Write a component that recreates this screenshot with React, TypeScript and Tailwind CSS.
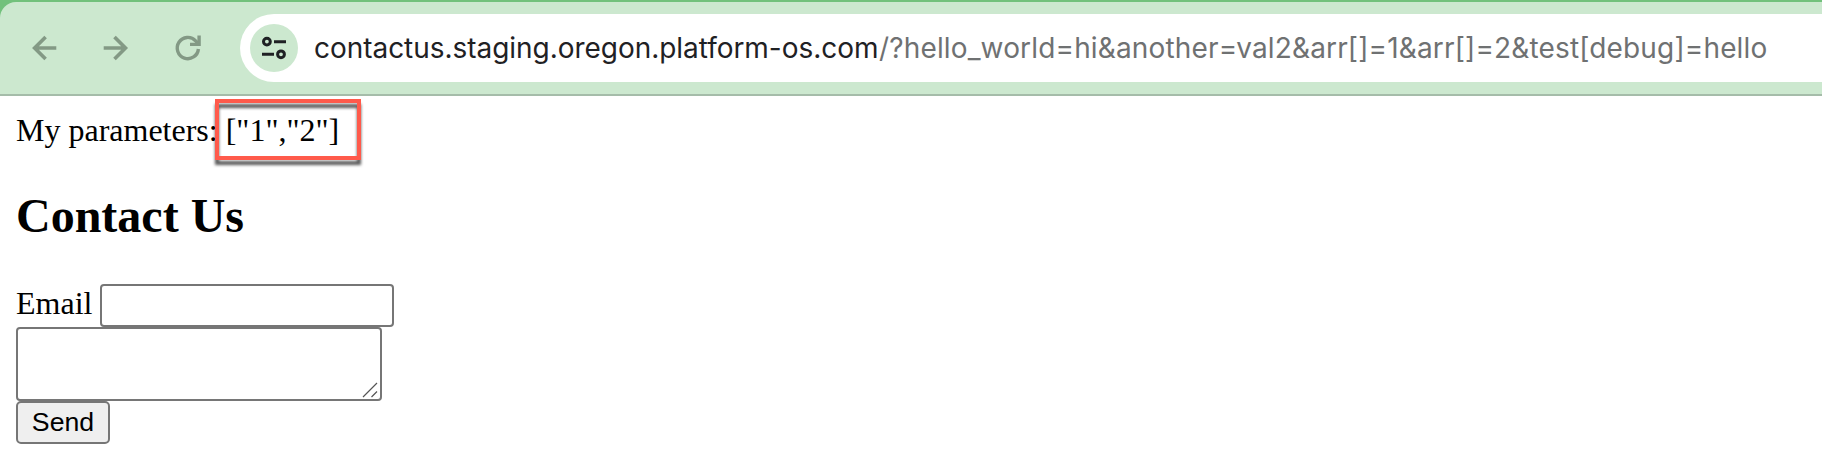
import React from "react";

function BackIcon() {
  return (
    <svg className="h-12 w-12" viewBox="0 0 48 48" fill="none" stroke="#839985" strokeWidth="3.6">
      <path d="M36.3 24H14.5M25.6 12.9L14.6 24L25.6 35.1" />
    </svg>
  );
}

function ForwardIcon() {
  return (
    <svg className="h-12 w-12" viewBox="0 0 48 48" fill="none" stroke="#839985" strokeWidth="3.6">
      <path d="M11.7 24H33.5M22.5 12.9L33.5 24L22.5 35.1" />
    </svg>
  );
}

function ReloadIcon() {
  return (
    <svg className="h-12 w-12" viewBox="0 0 48 48" fill="none" stroke="#839985" strokeWidth="3.4">
      <path d="M34.4 25A10.6 10.6 0 1 1 31.6 16.8L34.6 20" />
      <path d="M35.1 11.6V20.4H26" />
    </svg>
  );
}

function SiteSettingsIcon() {
  return (
    <svg className="h-12 w-12" viewBox="0 0 48 48" fill="none" stroke="#1f2124" strokeWidth="3">
      <circle cx="16.9" cy="17.6" r="3.4" />
      <circle cx="31" cy="30.3" r="3.4" />
      <path d="M24 17.7H36M12 30.3H24" />
    </svg>
  );
}

function Toolbar() {
  return (
    <header className="bg-[#72c17c] pt-0.5">
      <div className="flex h-[94px] items-center rounded-tl-[16px] border-b-2 border-[#a5bca9] bg-[#cce8cf] pl-5">
        <button aria-label="Back"><BackIcon /></button>
        <button aria-label="Forward" className="ml-6"><ForwardIcon /></button>
        <button aria-label="Reload" className="ml-6"><ReloadIcon /></button>
        <div className="ml-7 flex h-[68px] flex-1 items-center overflow-hidden rounded-l-full bg-white pl-2.5">
          <span className="rounded-full bg-[#cce8cf]"><SiteSettingsIcon /></span>
          <div className="ml-4 flex whitespace-pre font-['Inter',sans-serif] text-[28px] leading-9 text-[#6f7172]">
            <span className="w-[565px] tracking-[-0.04px] text-[#1f2124]">contactus.staging.oregon.platform-os.com</span>
            <span className="tracking-[0.15px]">/?hello_world=hi&amp;another=val2&amp;arr[]=1&amp;arr[]=2&amp;test[debug]=hello</span>
          </div>
        </div>
      </div>
    </header>
  );
}

export default function App() {
  return (
    <div className="h-[476px] overflow-hidden bg-white text-black">
      <Toolbar />
      <main className="px-4 pt-4 font-['Liberation_Serif',serif] text-[32px] leading-9">
        <p className="whitespace-pre">
          My parameters:{" "}
          <span className="relative">
            ["1","2"]
            <span className="absolute -left-[11px] -top-[13px] h-[61px] w-[146px] border-4 border-[#ff5a4b] [filter:drop-shadow(0_5px_1.5px_rgba(0,0,0,0.65))]" />
          </span>
        </p>
        <h1 className="mt-[41px] text-[48px] font-bold leading-[54px]">Contact Us</h1>
        <form className="mt-[41px]">
          <div className="flex h-[43px]">
            <label htmlFor="email" className="mt-px w-[84px]">Email</label>
            <input id="email" className="h-[43px] w-[294px] rounded-[4px] border-2 border-[#767676] bg-white" />
          </div>
          <div className="flex h-[74px] w-[366px] items-end justify-end rounded-[4px] border-2 border-[#767676] bg-white pr-[2px] pb-px">
            <svg className="h-4 w-4" viewBox="0 0 16 16" fill="none" stroke="#555" strokeWidth="1.2">
              <path d="M1 15L15 1M9.5 15L15 9.5" />
            </svg>
          </div>
          <button type="button" className="flex h-[43px] w-[94px] items-center justify-center rounded-[5px] border-2 border-[#767676] bg-[#efefef] pb-0.5 font-['Liberation_Sans',sans-serif] text-[26.67px] leading-8">Send</button>
        </form>
      </main>
    </div>
  );
}
